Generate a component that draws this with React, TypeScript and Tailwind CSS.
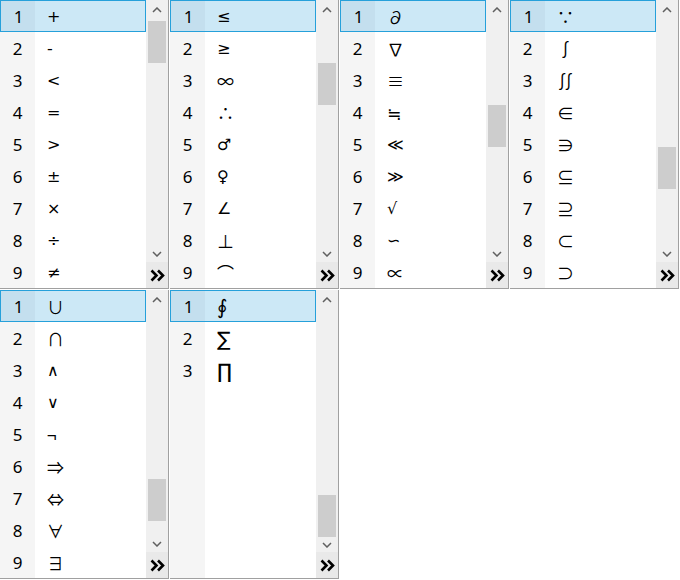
import React from 'react';

interface Panel {
  symbols: string[];
  thumb: string;
}

const panels: Panel[] = [
  { symbols: ['+', '-', '<', '=', '>', '±', '×', '÷', '≠'], thumb: 'mt-[0px]' },
  { symbols: ['≤', '≥', '∞', '∴', '♂', '♀', '∠', '⊥', '⌒'], thumb: 'mt-[42px]' },
  { symbols: ['∂', '∇', '≡', '≒', '≪', '≫', '√', '∽', '∝'], thumb: 'mt-[84px]' },
  { symbols: ['∵', '∫', '∬', '∈', '∋', '⊆', '⊇', '⊂', '⊃'], thumb: 'mt-[126px]' },
  { symbols: ['∪', '∩', '∧', '∨', '¬', '⇒', '⇔', '∀', '∃'], thumb: 'mt-[168px]' },
  { symbols: ['∮', '∑', '∏'], thumb: 'mt-[184px]' },
];

// glyphs that the CJK face draws unlike the reference
const dejavu = new Set([
  '+', '-', '<', '=', '>', '±', '×', '÷', '≠',
  '≤', '≥', '≪', '≫', '√', '∽', '♂', '♀', '∠', '∧', '∨',
]);
const big = new Set(['∮', '∑', '∏']);

const numFont = "font-['Noto_Sans','Noto_Sans_CJK_SC',sans-serif]";
const cjkFont = "font-['Noto_Sans_CJK_SC','DejaVu_Sans',sans-serif] text-[17px]";
const dvFont = "font-['DejaVu_Sans','Noto_Sans_CJK_SC',sans-serif] text-[16px]";
const bigFont = "font-['DejaVu_Sans','Noto_Sans_CJK_SC',sans-serif] text-[20px]";

function Chevron({ down }: { down?: boolean }) {
  return (
    <svg width="10" height="6" viewBox="0 0 10 6" className="block">
      <path
        d={down ? 'M1 1 L5 5 L9 1' : 'M1 5 L5 1 L9 5'}
        fill="none"
        stroke="#606060"
        strokeWidth="1.5"
      />
    </svg>
  );
}

function More() {
  return (
    <svg width="15" height="13" viewBox="0 0 15 13" className="block">
      <path d="M1.5 1.5 L6.5 6.5 L1.5 11.5 M8 1.5 L13 6.5 L8 11.5" fill="none" stroke="#000" strokeWidth="2.6" />
    </svg>
  );
}

function Symbol({ s }: { s: string }) {
  const f = big.has(s) ? bigFont : dejavu.has(s) ? dvFont : cjkFont;
  return <div className={`flex items-center pl-[12px] pt-[2px] text-black ${f}`}>{s}</div>;
}

function CandidatePanel({ panel }: { panel: Panel }) {
  return (
    <div className="flex h-[290px] w-[170px]">
      <div className="flex h-[289px] w-[169px] border-b border-r border-[#a0a0a0]">
        <div className="flex w-[146px] flex-col bg-[linear-gradient(to_right,#f5f5f5_35px,#ffffff_35px)]">
          {panel.symbols.map((s, i) =>
            i === 0 ? (
              <div key={i} className="flex h-[32px] border border-[#26a0da] bg-[#cce8f6]">
                <div className={`flex w-[34px] items-center justify-center bg-[#c4dfee] pl-[1px] pt-[2px] text-[17px] text-black ${numFont}`}>1</div>
                <Symbol s={s} />
              </div>
            ) : (
              <div key={i} className="flex h-[32px]">
                <div className={`flex w-[35px] items-center justify-center pt-[2px] text-[17px] text-black ${numFont}`}>{i + 1}</div>
                <Symbol s={s} />
              </div>
            ),
          )}
        </div>
        <div className="flex w-[22px] flex-col items-center bg-[#f0f0f0]">
          <div className="flex h-[21px] w-full items-center justify-center">
            <Chevron />
          </div>
          <div className="h-[226px] w-full px-[2px]">
            <div className={`h-[42px] w-full bg-[#cdcdcd] ${panel.thumb}`} />
          </div>
          <div className="flex h-[16px] w-full items-center justify-center">
            <Chevron down />
          </div>
          <div className="flex h-[26px] w-full items-center justify-center bg-[#e9e9e9]">
            <More />
          </div>
        </div>
      </div>
    </div>
  );
}

export default function App() {
  return (
    <div className="h-[580px] w-[680px] bg-white">
      <div className="grid grid-cols-[repeat(4,170px)] grid-rows-[290px_290px]">
        {panels.map((p, i) => (
          <CandidatePanel key={i} panel={p} />
        ))}
      </div>
    </div>
  );
}
